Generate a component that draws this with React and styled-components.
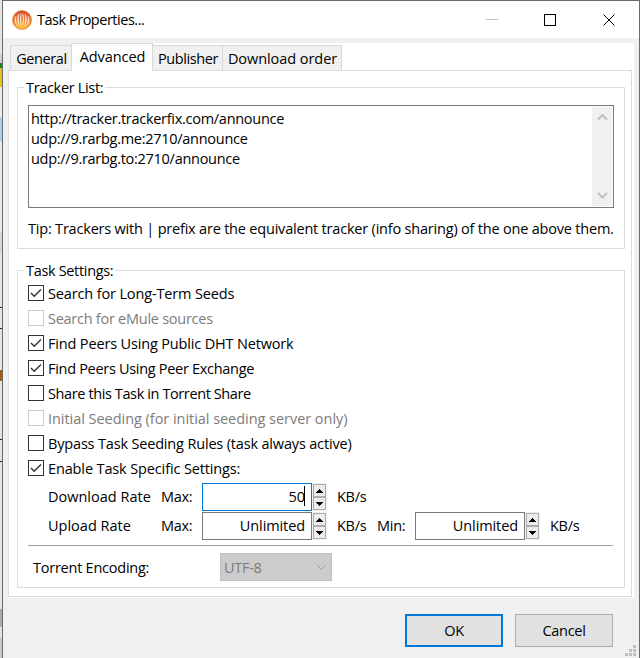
import React from "react";
import styled, { createGlobalStyle } from "styled-components";

const CHECKS = [
  { label: "Search for Long-Term Seeds", checked: true, spacing: -0.14 },
  { label: "Search for eMule sources", disabled: true, spacing: -0.26 },
  { label: "Find Peers Using Public DHT Network", checked: true, spacing: -0.16 },
  { label: "Find Peers Using Peer Exchange", checked: true, spacing: -0.3 },
  { label: "Share this Task in Torrent Share", spacing: -0.39 },
  {
    label: "Initial Seeding (for initial seeding server only)",
    disabled: true,
    spacing: -0.04,
  },
  { label: "Bypass Task Seeding Rules (task always active)", spacing: -0.17 },
  { label: "Enable Task Specific Settings:", checked: true, spacing: -0.13 },
];

function AppIcon() {
  return (
    <svg width="20" height="20" viewBox="0 0 20 20">
      <defs>
        <linearGradient id="ball" x1="0" y1="0" x2="0" y2="1">
          <stop offset="0" stopColor="#d4492a" />
          <stop offset="0.45" stopColor="#ec7030" />
          <stop offset="1" stopColor="#ffc030" />
        </linearGradient>
        <linearGradient id="flame" x1="0" y1="0" x2="0" y2="1">
          <stop offset="0" stopColor="#fff" />
          <stop offset="0.6" stopColor="#fff0d0" />
          <stop offset="1" stopColor="#ffd060" />
        </linearGradient>
      </defs>
      <circle cx="10" cy="10" r="9.5" fill="url(#ball)" stroke="#d68a62" strokeWidth="0.8" />
      <g fill="url(#flame)" stroke="url(#flame)" strokeWidth="0.3">
        <path d="M9.2 3.5 C7.6 8 8 13 9.6 18 C9 13 9 8 9.2 3.5z" />
        <path d="M10.8 3.5 C12.4 8 12 13 10.4 18 C11 13 11 8 10.8 3.5z" />
        <path d="M6.8 3.8 C4.8 8 5.2 13 8.2 17.6 C6.6 13 6.2 8 6.8 3.8z" />
        <path d="M13.2 3.8 C15.2 8 14.8 13 11.8 17.6 C13.4 13 13.8 8 13.2 3.8z" />
        <path d="M4 6 C2 10 3 14 6.4 17 C4.2 13.6 3.4 10 4 6z" />
        <path d="M16 6 C18 10 17 14 13.6 17 C15.8 13.6 16.6 10 16 6z" />
      </g>
    </svg>
  );
}

function Chevron({ down, color, width = 1 }) {
  return (
    <svg width="11" height="7" viewBox="0 0 11 7">
      <path
        d={down ? "M1 1 L5.5 5.5 L10 1" : "M1 5.5 L5.5 1 L10 5.5"}
        fill="none"
        stroke={color}
        strokeWidth={width}
      />
    </svg>
  );
}

function Check({ label, checked, disabled, spacing }) {
  return (
    <CheckRow $disabled={disabled} $spacing={spacing}>
      <Box $disabled={disabled}>
        {checked && (
          <svg width="14" height="14" viewBox="0 0 14 14">
            <path d="M2 7 L5.2 10.2 L12 3.4" fill="none" stroke="#333" strokeWidth="1.4" />
          </svg>
        )}
      </Box>
      {label}
    </CheckRow>
  );
}

function Spinner({ value, active }) {
  return (
    <>
      <RateInput $active={active}>
        {value}
        {active && <Caret />}
      </RateInput>
      <Steps>
        <Step>
          <svg width="7" height="4" shapeRendering="crispEdges">
            <path d="M3 0h1v1h1v1h1v1h1v1H0V3h1V2h1V1h1z" />
          </svg>
        </Step>
        <Step>
          <svg width="7" height="4" shapeRendering="crispEdges">
            <path d="M0 0h7v1H6v1H5v1H4v1H3V3H2V2H1V1H0z" />
          </svg>
        </Step>
      </Steps>
    </>
  );
}

export default function App() {
  return (
    <Desktop>
      <GlobalStyle />
      <Backdrop />
      <Dialog>
        <TitleBar>
          <AppIcon />
          <Title>Task Properties...</Title>
          <svg width="130" height="12" shapeRendering="crispEdges">
            <rect x="0" y="5" width="12" height="1" fill="#c4c4c4" />
            <rect x="58.5" y="0.5" width="11" height="11" fill="none" stroke="#000" />
            <path
              d="M117.5 0.5 L128.5 11.5 M128.5 0.5 L117.5 11.5"
              stroke="#000"
              shapeRendering="auto"
            />
          </svg>
        </TitleBar>
        <Pages>
          <Tabs>
            <Tab $w={61}>General</Tab>
            <Tab $w={82} $active>
              Advanced
            </Tab>
            <Tab $w={70}>Publisher</Tab>
            <Tab $w={120} $last>
              Download order
            </Tab>
          </Tabs>
          <Page>
            <Group $h={162}>
              <Legend>Tracker List:</Legend>
              <TrackerBox>
                <TrackerText>
                  http://tracker.trackerfix.com/announce
                  <br />
                  udp://9.rarbg.me:2710/announce
                  <br />
                  udp://9.rarbg.to:2710/announce
                </TrackerText>
                <ScrollBar>
                  <Chevron color="#bfbfbf" width={2} />
                  <Chevron down color="#bfbfbf" width={2} />
                </ScrollBar>
              </TrackerBox>
              <Tip>
                Tip: Trackers with | prefix are the equivalent tracker (info sharing) of the one
                above them.
              </Tip>
            </Group>
            <Group $h={318}>
              <Legend>Task Settings:</Legend>
              <CheckList>
                {CHECKS.map((item) => (
                  <Check key={item.label} {...item} />
                ))}
              </CheckList>
              <RateRow>
                <RateName>Download Rate</RateName>
                <RateLabel $w={41}>Max:</RateLabel>
                <Spinner value="50" active />
                <Unit>KB/s</Unit>
              </RateRow>
              <RateRow>
                <RateName>Upload Rate</RateName>
                <RateLabel $w={41}>Max:</RateLabel>
                <Spinner value="Unlimited" />
                <Unit>KB/s</Unit>
                <RateLabel $w={38}>Min:</RateLabel>
                <Spinner value="Unlimited" />
                <Unit>KB/s</Unit>
              </RateRow>
              <Divider />
              <EncodingRow>
                <EncodingLabel>Torrent Encoding:</EncodingLabel>
                <Combo>
                  UTF-8
                  <Chevron down color="#a0a0a0" />
                </Combo>
              </EncodingRow>
            </Group>
          </Page>
        </Pages>
        <Footer>
          <Button $primary>OK</Button>
          <Button>Cancel</Button>
        </Footer>
        <Grip width="11" height="11" shapeRendering="crispEdges">
          <path
            d="M8 0h3v3h-3z M4 4h3v3h-3z M8 4h3v3h-3z M0 8h3v3h-3z M4 8h3v3h-3z M8 8h3v3h-3z"
            fill="#bfbfbf"
          />
        </Grip>
      </Dialog>
    </Desktop>
  );
}

const GlobalStyle = createGlobalStyle`
  * {
    box-sizing: border-box;
  }

  body {
    margin: 0;
    overflow: hidden;
    font-family: "Open Sans", "Noto Sans", sans-serif;
    font-size: 14.5px;
    letter-spacing: -0.28px;
    color: #000;
  }

  svg {
    display: block;
    flex: none;
  }
`;

const Desktop = styled.div`
  display: flex;
  width: 640px;
  height: 658px;
`;

const Backdrop = styled.div`
  width: 2px;
  background: linear-gradient(
    #e4e4e4 54px, #d0d0d0 54px 63px, #16881a 63px 68px, #e3c51a 68px 87px,
    #ececec 87px 117px, #a9d0ef 117px 141px, #e8e8e8 141px 232px,
    #d6d6d6 232px 253px, #e4e4e4 253px 307px, #222 307px 308px,
    #e4e4e4 308px 328px, #222 328px 329px, #e4e4e4 329px 370px,
    #a75c12 370px 381px, #e4e4e4 381px 439px, #222 439px 440px,
    #e4e4e4 440px 461px, #222 461px 462px, #e4e4e4 462px 609px,
    #aaa 609px 627px, #e4e4e4 627px 638px, #c8c8c8 638px
  );
`;

const Dialog = styled.div`
  position: relative;
  width: 638px;
  border: 1px solid #6b6b6b;
  border-bottom: 0;
  background: #f0f0f0;
`;

const TitleBar = styled.div`
  display: flex;
  align-items: center;
  height: 37px;
  padding: 0 23px 0 9px;
  background: #fff;
`;

const Title = styled.div`
  flex: 1;
  margin-left: 5px;
  letter-spacing: -0.48px;
`;

const Pages = styled.div`
  display: flex;
  flex-direction: column;
  width: 626px;
  height: 555px;
  margin: 5px 0 0 5px;
  padding-right: 2px;
  background: #fff;
`;

const Tabs = styled.div`
  display: flex;
  align-items: flex-end;
  height: 27px;
  padding-left: 2px;
  background: linear-gradient(90deg, #f0f0f0 64px, #fff 64px);
`;

const Tab = styled.div`
  position: relative;
  z-index: ${(p) => (p.$active ? 1 : 0)};
  width: ${(p) => p.$w}px;
  height: ${(p) => (p.$active ? 28 : 25)}px;
  margin-bottom: ${(p) => (p.$active ? -1 : 0)}px;
  margin-right: ${(p) => (p.$active ? -1 : 0)}px;
  padding-left: 1px;
  border: 1px solid #d9d9d9;
  border-right-width: ${(p) => (p.$active || p.$last ? 1 : 0)}px;
  border-bottom: 0;
  background: ${(p) => (p.$active ? "#fff" : "#f0f0f0")};
  line-height: 25px;
  text-align: center;
  letter-spacing: ${(p) => (p.$last || p.$active ? -0.06 : -0.4)}px;
`;

const Page = styled.div`
  display: flex;
  flex-direction: column;
  gap: 21px;
  width: 624px;
  height: 527px;
  padding: 16px 6px 8px 8px;
  border: 1px solid #dcdcdc;
`;

const Group = styled.div`
  height: ${(p) => p.$h}px;
  padding: 0 10px;
  border: 1px solid #dcdcdc;
`;

const Legend = styled.div`
  width: max-content;
  height: 20px;
  margin: -10px 0 -1px -4px;
  padding: 0 2px;
  background: #fff;
  line-height: 20px;
  letter-spacing: -0.33px;
`;

const TrackerBox = styled.div`
  display: flex;
  justify-content: space-between;
  width: 586px;
  height: 103px;
  margin-top: 8px;
  padding: 1px;
  border: 1px solid #7a7a7a;
`;

const TrackerText = styled.div`
  padding: 2px 0 0 1px;
  line-height: 20px;
`;

const ScrollBar = styled.div`
  display: flex;
  flex-direction: column;
  align-items: center;
  justify-content: space-between;
  width: 20px;
  padding: 7px 0;
  background: #f0f0f0;
`;

const Tip = styled.div`
  margin-top: 11px;
  line-height: 20px;
  letter-spacing: -0.2px;
  white-space: nowrap;
`;

const CheckList = styled.div`
  margin: 1px 0 2px;
`;

const CheckRow = styled.div`
  display: flex;
  align-items: center;
  gap: 4px;
  height: 25px;
  color: ${(p) => (p.$disabled ? "#7c7c7c" : "#000")};
  letter-spacing: ${(p) => p.$spacing}px;
`;

const Box = styled.div`
  width: 16px;
  height: 16px;
  margin-bottom: 1px;
  border: 1px solid ${(p) => (p.$disabled ? "#ccc" : "#333")};
`;

const RateRow = styled.div`
  display: flex;
  align-items: center;
  height: 29px;
  padding: 0 0 1px 20px;
`;

const RateName = styled.div`
  width: 113px;
  padding-bottom: 2px;
  letter-spacing: 0;
`;

const RateLabel = styled.div`
  width: ${(p) => p.$w}px;
  padding-bottom: 2px;
`;

const RateInput = styled.div`
  display: flex;
  align-items: center;
  justify-content: flex-end;
  width: 110px;
  height: 28px;
  padding: 0 6px 2px 0;
  border: 1px solid ${(p) => (p.$active ? "#0078d7" : "#7a7a7a")};
  letter-spacing: -0.1px;
`;

const Caret = styled.div`
  width: 1px;
  height: 20px;
  margin-left: -1px;
  background: #000;
`;

const Steps = styled.div`
  display: flex;
  flex-direction: column;
  width: 15px;
  height: 28px;
  padding: 1px;
  background: #f0f0f0;
`;

const Step = styled.div`
  display: flex;
  align-items: center;
  justify-content: center;
  height: 13px;
  border: 1px solid #acacac;
  background: #ececec;
`;

const Unit = styled.div`
  width: 40px;
  margin-left: 10px;
  padding-bottom: 2px;
`;

const Divider = styled.div`
  height: 1px;
  width: 585px;
  margin-top: 4px;
  background: #a0a0a0;
`;

const EncodingRow = styled.div`
  display: flex;
  align-items: center;
  margin-top: 7px;
  padding-left: 5px;
`;

const EncodingLabel = styled.div`
  width: 187px;
  letter-spacing: -0.24px;
`;

const Combo = styled.div`
  display: flex;
  align-items: center;
  justify-content: space-between;
  width: 112px;
  height: 28px;
  padding: 0 4px 0 3px;
  border: 1px solid #bfbfbf;
  background: #ccc;
  color: #7c7c7c;
`;

const Footer = styled.div`
  display: flex;
  justify-content: flex-end;
  gap: 12px;
  margin-top: 16px;
  padding-right: 26px;
`;

const Button = styled.div`
  width: 98px;
  height: 33px;
  border: ${(p) => (p.$primary ? "2px solid #0078d7" : "1px solid #adadad")};
  background: #e1e1e1;
  line-height: ${(p) => (p.$primary ? 30 : 32)}px;
  text-align: center;
`;

const Grip = styled.svg`
  position: absolute;
  right: 3px;
  bottom: 2px;
`;
